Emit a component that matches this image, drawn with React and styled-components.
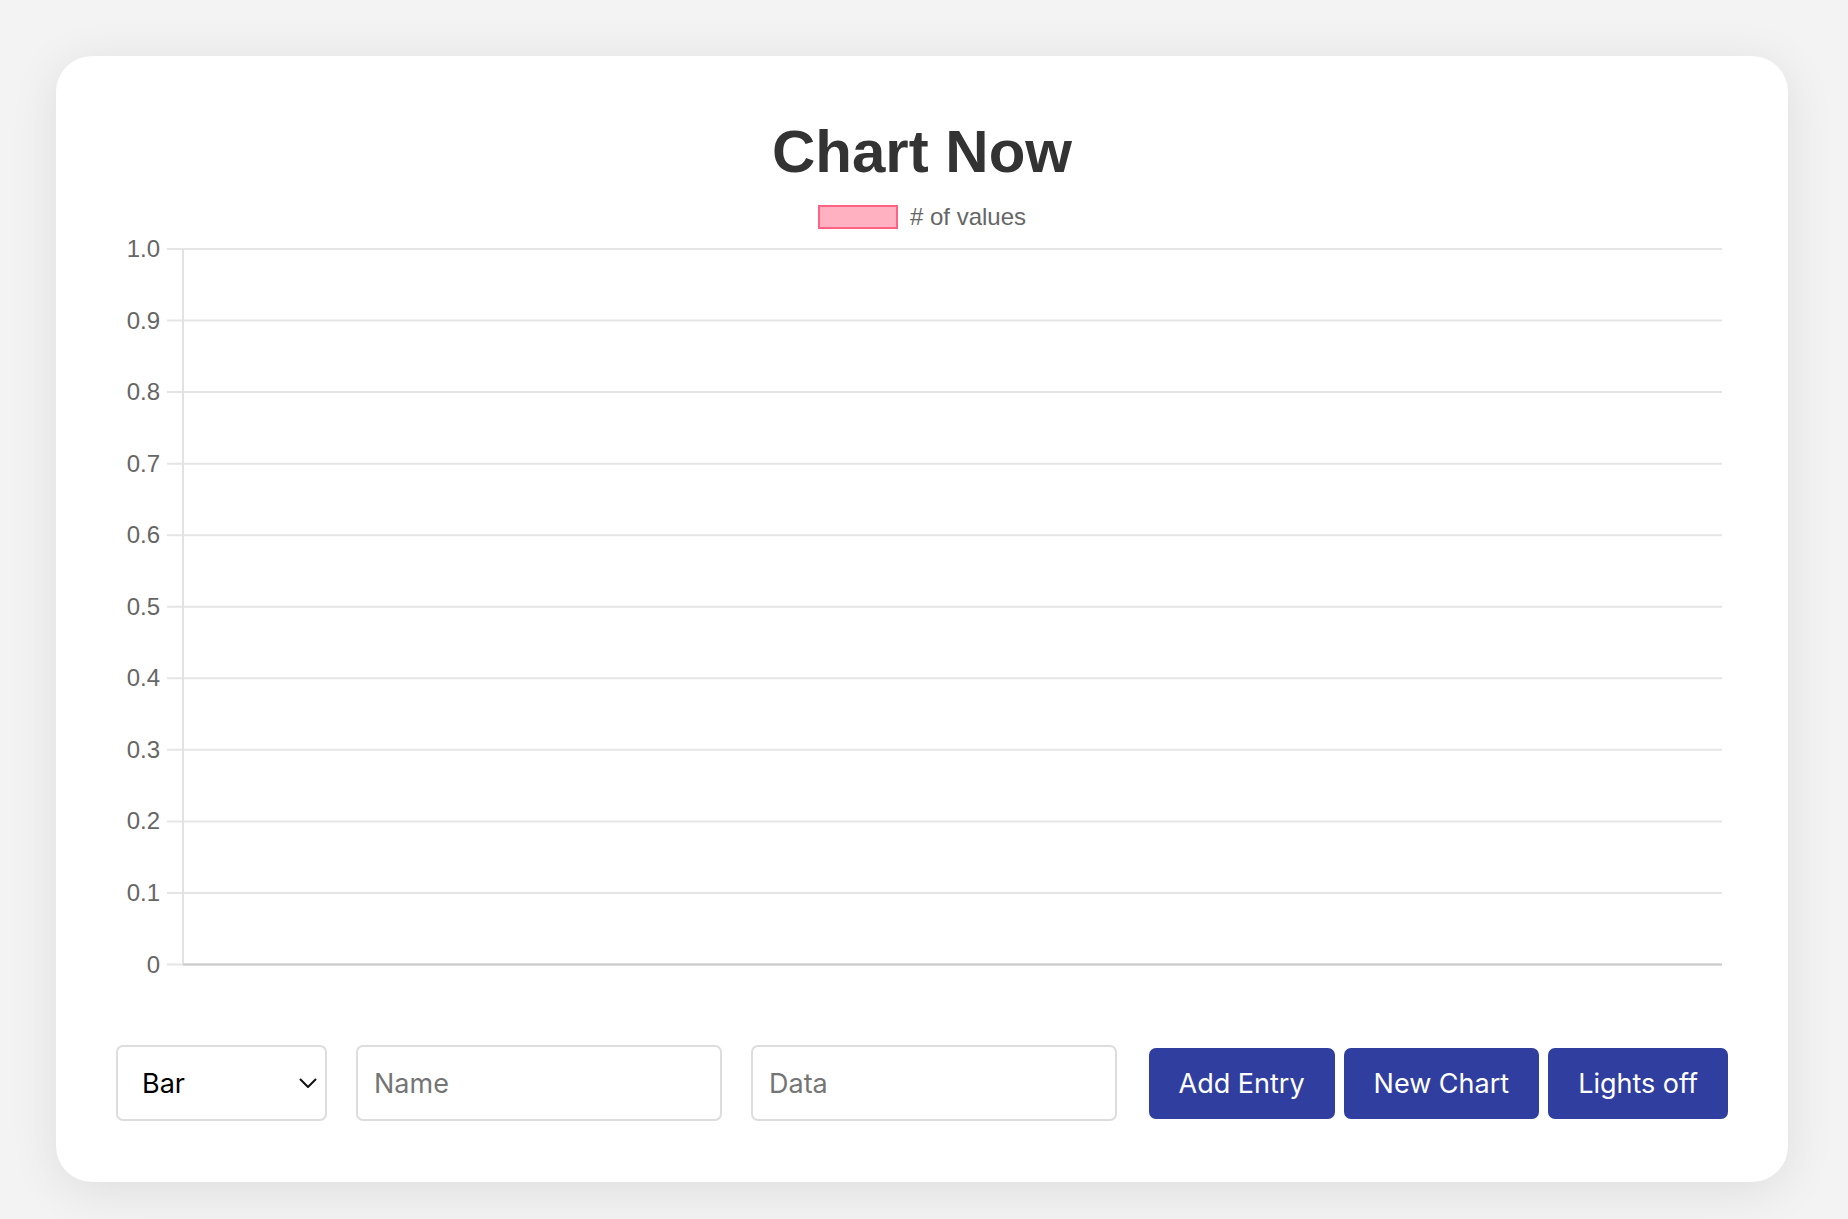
import React from "react";
import styled, { createGlobalStyle } from "styled-components";

const GlobalStyle = createGlobalStyle`
  body {
    margin: 0;
    background-color: #f3f3f3;
  }
`;

const Page = styled.div`
  padding: 56px 60px 37px 56px;
`;

const Card = styled.div`
  background-color: #ffffff;
  border-radius: 36px;
  box-shadow: 0 8px 50px rgba(0, 0, 0, 0.09);
  padding: 61px 60px 61px 60px;
  display: flex;
  flex-direction: column;
`;

const Title = styled.h1`
  margin: 0;
  text-align: center;
  font-family: "Liberation Sans", Arial, sans-serif;
  font-size: 60px;
  line-height: 69px;
  font-weight: 700;
  color: #333333;
`;

const Legend = styled.div`
  margin-top: 19px;
  height: 24px;
  display: flex;
  justify-content: center;
  align-items: center;
  gap: 12px;
`;

const LegendSwatch = styled.span`
  box-sizing: border-box;
  width: 80px;
  height: 24px;
  border: 2px solid #ff6384;
  background-color: rgba(255, 99, 132, 0.5);
`;

const LegendLabel = styled.span`
  font-family: "Liberation Sans", Arial, sans-serif;
  font-size: 24px;
  line-height: 24px;
  color: #666666;
`;

const ChartSvg = styled.svg`
  display: block;
  margin-top: 7px;
  width: 100%;
  height: 745px;
`;

const Controls = styled.div`
  margin-top: 64px;
  display: flex;
  align-items: center;
  gap: 29px;
`;

const SelectWrap = styled.div`
  position: relative;
  width: 211px;
  height: 76px;
`;

const Select = styled.select`
  box-sizing: border-box;
  width: 100%;
  height: 100%;
  appearance: none;
  border: 2px solid #dddddd;
  border-radius: 7px;
  background-color: #ffffff;
  padding: 0 24px;
  font-family: Inter, "Open Sans", sans-serif;
  font-size: 27px;
  color: #000000;
  outline: none;
`;

const Chevron = styled.svg`
  position: absolute;
  top: 33px;
  right: 10px;
  width: 18px;
  height: 10px;
  pointer-events: none;
`;

const TextInput = styled.input`
  box-sizing: border-box;
  width: 366px;
  height: 76px;
  border: 2px solid #dddddd;
  border-radius: 7px;
  padding: 0 16px;
  font-family: Inter, "Open Sans", sans-serif;
  font-size: 27px;
  color: #000000;
  outline: none;

  &::placeholder {
    color: #757575;
  }
`;

const ButtonGroup = styled.div`
  margin-left: auto;
  display: flex;
  gap: 9px;
`;

const ActionButton = styled.button`
  height: 71px;
  padding: 0 30px;
  border: none;
  border-radius: 7px;
  background-color: #303f9f;
  color: #ffffff;
  font-family: Inter, "Open Sans", sans-serif;
  font-size: 27px;
  cursor: pointer;
`;

const ticks = ["1.0", "0.9", "0.8", "0.7", "0.6", "0.5", "0.4", "0.3", "0.2", "0.1", "0"];
const TOP = 13;
const STEP = 71.55;
const AXIS_X = 67;
const RIGHT = 1606;

const BarChart = () => {
  const bottom = TOP + STEP * 10;
  return (
    <ChartSvg viewBox="0 0 1612 745" preserveAspectRatio="none">
      {ticks.map((label, i) => {
        const y = TOP + STEP * i;
        return (
          <g key={label}>
            <line x1={51} x2={RIGHT} y1={y} y2={y} stroke="#e5e5e5" strokeWidth="2" />
            <text
              x={44}
              y={y + 8}
              textAnchor="end"
              fontFamily="'Liberation Sans', Arial, sans-serif"
              fontSize="24"
              fill="#666666"
            >
              {label}
            </text>
          </g>
        );
      })}
      <line x1={AXIS_X} x2={AXIS_X} y1={TOP} y2={bottom} stroke="#e2e2e2" strokeWidth="2" />
      <line x1={AXIS_X} x2={RIGHT} y1={bottom} y2={bottom} stroke="#cacaca" strokeWidth="2" />
    </ChartSvg>
  );
};

const App = () => {
  return (
    <Page>
      <GlobalStyle />
      <Card>
        <Title>Chart Now</Title>
        <Legend>
          <LegendSwatch />
          <LegendLabel># of values</LegendLabel>
        </Legend>
        <BarChart />
        <Controls>
          <SelectWrap>
            <Select defaultValue="bar">
              <option value="bar">Bar</option>
              <option value="line">Line</option>
              <option value="pie">Pie</option>
            </Select>
            <Chevron viewBox="0 0 18 10">
              <path d="M1 1 L9 9 L17 1" fill="none" stroke="#111" strokeWidth="2" />
            </Chevron>
          </SelectWrap>
          <TextInput placeholder="Name" />
          <TextInput placeholder="Data" />
          <ButtonGroup>
            <ActionButton>Add Entry</ActionButton>
            <ActionButton>New Chart</ActionButton>
            <ActionButton>Lights off</ActionButton>
          </ButtonGroup>
        </Controls>
      </Card>
    </Page>
  );
};

export default App;
